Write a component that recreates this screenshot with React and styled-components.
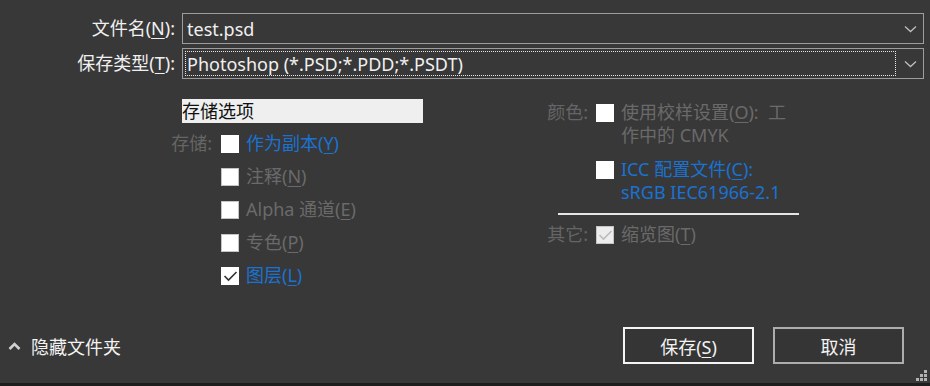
import React from 'react'
import styled, { createGlobalStyle } from 'styled-components'

const Global = createGlobalStyle`
  html, body {
    margin: 0;
    padding: 0;
    background: #383838;
  }
  * { box-sizing: border-box; }
`

const Dialog = styled.div`
  position: relative;
  width: 930px;
  height: 386px;
  background: #383838;
  display: flex;
  flex-direction: column;
  font-family: "Noto Sans", "Noto Sans CJK SC", sans-serif;
  font-size: 18px;
  color: #f0f0f0;
  overflow: hidden;
`

const Fields = styled.div`
  display: flex;
  flex-direction: column;
  gap: 4px;
  padding: 13px 6px 0 0;
`

const FieldRow = styled.div`
  display: grid;
  grid-template-columns: 175px 1fr;
  column-gap: 7px;
  align-items: center;
`

const FieldLabel = styled.label`
  text-align: right;
  line-height: 31px;
  white-space: nowrap;
  color: #f0f0f0;
  u { text-decoration-thickness: 1px; text-underline-offset: 3px; }
`

const Combo = styled.div`
  height: 31px;
  border: 1px solid #9d9d9d;
  display: flex;
  align-items: center;
  padding: 2px 6px 2px 2px;
`

const ComboValue = styled.div`
  flex: 1;
  height: 100%;
  display: flex;
  align-items: center;
  padding-left: 1px;
  line-height: 1;
  white-space: nowrap;
  border: 1px ${p => (p.$focused ? 'dotted #e8e8e8' : 'solid transparent')};
  margin-right: 8px;
`

const Chevron = ({ up }) => (
  <svg width="13" height="8" viewBox="0 0 13 8">
    <path
      d={up ? 'M1.5 7 L6.5 2 L11.5 7' : 'M1 1.5 L6.5 6.5 L12 1.5'}
      fill="none"
      stroke={up ? '#d0d0d0' : '#bdbdbd'}
      strokeWidth={up ? 2.6 : 1.3}
    />
  </svg>
)

const Options = styled.div`
  flex: 1;
  display: flex;
  padding-top: 20px;
`

const LeftGroup = styled.div`
  margin-left: 162px;
  width: 270px;
  display: flex;
  flex-direction: column;
`

const RightGroup = styled.div`
  margin-left: 108px;
  width: 270px;
  display: flex;
  flex-direction: column;
  padding-top: 2px;
`

const GroupTitle = styled.div`
  margin-left: 20px;
  margin-bottom: 4px;
  width: 241px;
  height: 24px;
  background: #efefef;
  color: #111;
  line-height: 24px;
`

const Row = styled.div`
  display: flex;
  align-items: ${p => (p.$top ? 'flex-start' : 'center')};
  min-height: ${p => (p.$top ? 'auto' : '33px')};
  margin-top: ${p => p.$gap || 0}px;
`

const RowLabel = styled.span`
  width: ${p => p.$w || 50}px;
  flex-shrink: 0;
  text-align: right;
  color: #656565;
  line-height: 23px;
  margin-right: ${p => p.$mr || 9}px;
`

const Box = styled.span`
  width: 18px;
  height: 18px;
  flex-shrink: 0;
  display: flex;
  align-items: center;
  justify-content: center;
  background: ${p => (p.$grey ? '#ededed' : '#ffffff')};
  border: 1px solid ${p => (p.$dim ? '#c4c4c4' : '#ffffff')};
  margin-right: 7px;
  margin-top: ${p => (p.$top ? 3 : 0)}px;
`

const OptText = styled.span`
  line-height: 23px;
  color: ${p => (p.$blue ? '#1a72d2' : '#6a6a6a')};
  white-space: nowrap;
  u { text-decoration-thickness: 1px; text-underline-offset: 3px; }
`

const Separator = styled.div`
  margin: 9px 0 0 18px;
  width: 241px;
  height: 2px;
  background: #e6e6e6;
`

const Footer = styled.div`
  display: flex;
  align-items: center;
  height: 37px;
  margin-bottom: 19px;
  padding: 0 26px 0 8px;
`

const Toggle = styled.div`
  display: flex;
  align-items: center;
  gap: 10px;
  color: #f2f2f2;
  flex: 1;
`

const Button = styled.button`
  width: 131px;
  height: 37px;
  margin-left: 19px;
  background: #353535;
  color: #f2f2f2;
  font-family: inherit;
  font-size: 18px;
  border: 2px solid ${p => (p.$primary ? '#f4f4f4' : '#adadad')};
  u { text-decoration-thickness: 1px; text-underline-offset: 3px; }
`

const Strip = styled.div`
  height: 3px;
  background: #1d1d1d;
`

const Grip = styled.svg`
  position: absolute;
  right: 3px;
  bottom: 5px;
`

const Check = ({ dim }) => (
  <svg width="15" height="12" viewBox="0 0 15 12">
    <path d="M1.5 6 L5.5 10 L13.5 2" fill="none" stroke={dim ? '#bcbcbc' : '#333'} strokeWidth="1.6" />
  </svg>
)

const Option = ({ label, checked, dim, blue, children }) => (
  <Row>
    <RowLabel>{label}</RowLabel>
    <Box $dim={dim}>{checked && <Check />}</Box>
    <OptText $blue={blue}>{children}</OptText>
  </Row>
)

export default function App() {
  return (
    <Dialog>
      <Global />
      <Fields>
        <FieldRow>
          <FieldLabel>文件名(<u>N</u>):</FieldLabel>
          <Combo>
            <ComboValue>test.psd</ComboValue>
            <Chevron />
          </Combo>
        </FieldRow>
        <FieldRow>
          <FieldLabel>保存类型(<u>T</u>):</FieldLabel>
          <Combo>
            <ComboValue $focused>Photoshop (*.PSD;*.PDD;*.PSDT)</ComboValue>
            <Chevron />
          </Combo>
        </FieldRow>
      </Fields>

      <Options>
        <LeftGroup>
          <GroupTitle>存储选项</GroupTitle>
          <Option label="存储:" blue>作为副本(<u>Y</u>)</Option>
          <Option dim>注释(<u>N</u>)</Option>
          <Option dim>Alpha 通道(<u>E</u>)</Option>
          <Option dim>专色(<u>P</u>)</Option>
          <Option checked blue>图层(<u>L</u>)</Option>
        </LeftGroup>

        <RightGroup>
          <Row $top>
            <RowLabel $w={48} $mr={8}>颜色:</RowLabel>
            <Box $top />
            <OptText>使用校样设置(<u>O</u>):&nbsp; 工<br />作中的 CMYK</OptText>
          </Row>
          <Row $top $gap={11}>
            <RowLabel $w={48} $mr={8} />
            <Box $top />
            <OptText $blue>ICC 配置文件(<u>C</u>):<br />sRGB IEC61966-2.1</OptText>
          </Row>
          <Separator />
          <Row $top $gap={8}>
            <RowLabel $w={48} $mr={8}>其它:</RowLabel>
            <Box $top $dim $grey><Check dim /></Box>
            <OptText>缩览图(<u>T</u>)</OptText>
          </Row>
        </RightGroup>
      </Options>

      <Footer>
        <Toggle>
          <Chevron up />
          <span>隐藏文件夹</span>
        </Toggle>
        <Button $primary>保存(<u>S</u>)</Button>
        <Button>取消</Button>
      </Footer>
      <Strip />

      <Grip width="11" height="11" viewBox="0 0 11 11">
        <g fill="#b3b3b3">
          <rect x="8" y="0" width="3" height="3" />
          <rect x="4" y="4" width="3" height="3" />
          <rect x="8" y="4" width="3" height="3" />
          <rect x="0" y="8" width="3" height="3" />
          <rect x="4" y="8" width="3" height="3" />
          <rect x="8" y="8" width="3" height="3" />
        </g>
      </Grip>
    </Dialog>
  )
}
